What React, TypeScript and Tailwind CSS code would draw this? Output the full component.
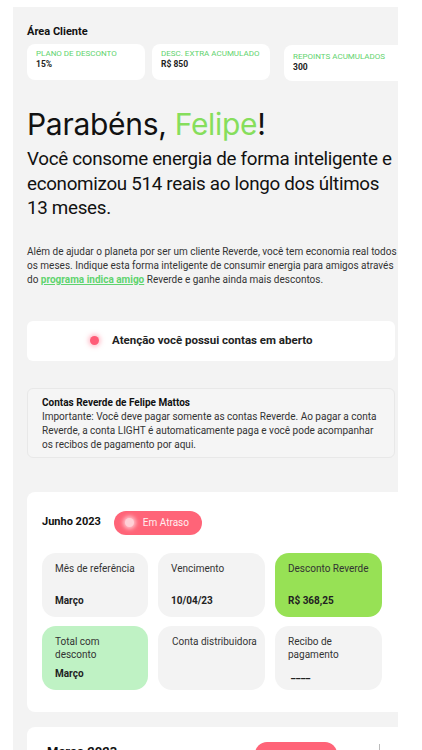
import React from "react";

const Cell: React.FC<{
  label: string;
  value?: string;
  tone?: "gray" | "green" | "mint";
}> = ({ label, value, tone = "gray" }) => {
  const bg =
    tone === "green" ? "bg-[#97e155]" : tone === "mint" ? "bg-[#bff2c4]" : "bg-[#f3f3f3]";
  return (
    <div className={`${bg} rounded-[14px] h-[64px] pl-[13px] pr-[8px] pt-[9px] pb-[10px] flex flex-col justify-between`}>
      <p className="text-[10px] leading-[13px] text-[#333]">{label}</p>
      {value && <p className="text-[10px] leading-[13px] font-bold text-[#222]">{value}</p>}
    </div>
  );
};

const Pill: React.FC<{ text: string }> = ({ text }) => (
  <div className="flex items-center gap-[9px] bg-[#ff6478] rounded-full h-[24px] pl-[11px] pr-[13px]">
    <span className="w-[9px] h-[9px] rounded-full bg-[#ffd0d7] shadow-[0_0_4px_2px_rgba(255,225,230,0.8)]" />
    <span className="text-[10px] text-[#ffeef0]">{text}</span>
  </div>
);

export default function App() {
  return (
    <div className="bg-white h-[750px] overflow-hidden font-['Roboto',sans-serif]">
      <div className="ml-[13px] mt-[7px] w-[385px] h-[743px] bg-[#f3f3f3] pl-[14px] pt-[18px] overflow-hidden">
        <h3 className="text-[11px] leading-[14px] font-bold text-[#111]">Área Cliente</h3>
        <div className="flex mt-[5px] w-[420px]">
          <div className="bg-white rounded-[8px] w-[118px] h-[36px] px-[9px] pt-[5px]">
            <p className="text-[8px] leading-[10px] text-[#5fd36e]">PLANO DE DESCONTO</p>
            <p className="text-[8.5px] leading-[11px] font-bold text-[#222]">15%</p>
          </div>
          <div className="bg-white rounded-[8px] w-[118px] h-[36px] px-[9px] pt-[5px] ml-[7px]">
            <p className="text-[8px] leading-[10px] text-[#5fd36e]">DESC. EXTRA ACUMULADO</p>
            <p className="text-[8.5px] leading-[11px] font-bold text-[#222]">R$ 850</p>
          </div>
          <div className="bg-white rounded-[8px] w-[130px] h-[36px] px-[9px] pt-[7px] ml-[14px] mt-[1px]">
            <p className="text-[8px] leading-[10px] text-[#5fd36e]">REPOINTS ACUMULADOS</p>
            <p className="text-[8.5px] leading-[11px] font-bold text-[#222]">300</p>
          </div>
        </div>

        <h1 className="mt-[25px] text-[30px] leading-[36px] text-[#111] font-['Inter',sans-serif] tracking-[-0.3px]">
          Parabéns, <span className="text-[#86de5c]">Felipe</span>!
        </h1>
        <p className="mt-[5px] text-[18.8px] leading-[24.5px] tracking-[-0.3px] text-[#111]">
          Você consome energia de forma inteligente e economizou 514 reais ao longo dos últimos 13 meses.
        </p>

        <p className="mt-[24px] text-[10px] leading-[14px] text-[#333]">
          Além de ajudar o planeta por ser um cliente Reverde, você tem economia real todos os meses. Indique esta
          forma inteligente de consumir energia para amigos através do{" "}
          <a className="text-[#5fd36e] font-bold underline">programa indica amigo</a> Reverde e ganhe ainda mais
          descontos.
        </p>

        <div className="mt-[34px] mr-[3px] bg-white rounded-[6px] h-[40px] flex items-center pl-[63px] gap-[13px]">
          <span className="w-[9px] h-[9px] rounded-full bg-[#ff5c77] shadow-[0_0_4px_2px_rgba(255,140,160,0.5)]" />
          <span className="text-[11.5px] font-bold text-[#222]">Atenção você possui contas em aberto</span>
        </div>

        <div className="mt-[27px] mr-[3px] bg-[#f5f5f5] border border-[#e8e8e8] rounded-[6px] h-[70px] px-[14px] pt-[7px]">
          <p className="text-[10px] leading-[14px] font-bold text-[#111]">Contas Reverde de Felipe Mattos</p>
          <p className="text-[10px] leading-[14px] text-[#333]">
            Importante: Você deve pagar somente as contas Reverde. Ao pagar a conta Reverde, a conta LIGHT é
            automaticamente paga e você pode acompanhar os recibos de pagamento por aqui.
          </p>
        </div>

        <div className="mt-[34px] bg-white rounded-l-[8px] w-[380px] h-[220px] pl-[15px] pt-[19px]">
          <div className="flex items-center gap-[13px]">
            <span className="text-[11px] font-bold text-[#111]">Junho 2023</span>
            <Pill text="Em Atraso" />
          </div>
          <div className="grid grid-cols-[106px_107px_107px] gap-x-[10px] gap-y-[9px] mt-[18px]">
            <Cell label="Mês de referência" value="Março" />
            <Cell label="Vencimento" value="10/04/23" />
            <Cell label="Desconto Reverde" value="R$ 368,25" tone="green" />
            <Cell label="Total com desconto" value="Março" tone="mint" />
            <div className="bg-[#f3f3f3] rounded-[14px] h-[64px] pl-[14px] pt-[9px]">
              <p className="text-[10px] leading-[13px] text-[#333] whitespace-nowrap">Conta distribuidora</p>
            </div>
            <div className="bg-[#f3f3f3] rounded-[14px] h-[64px] pl-[13px] pr-[20px] pt-[9px] flex flex-col justify-between pb-[10px]">
              <p className="text-[10px] leading-[13px] text-[#333]">Recibo de pagamento</p>
              <p className="text-[10px] leading-[10px] text-[#222] font-bold tracking-[0.5px] pl-[3px]">____</p>
            </div>
          </div>
        </div>

        <div className="mt-[15px] bg-white rounded-l-[8px] w-[380px] h-[60px] pl-[20px] pt-[15px]">
          <div className="flex items-start">
            <span className="text-[13px] leading-[16px] font-bold text-[#111] mt-[2px]">Março 2023</span>
            <div className="ml-[138px] bg-[#ff6478] rounded-full h-[24px] w-[82px]" />
            <div className="ml-[42px] w-px h-[20px] bg-[#bbb] mt-[2px]" />
          </div>
        </div>
      </div>
    </div>
  );
}
